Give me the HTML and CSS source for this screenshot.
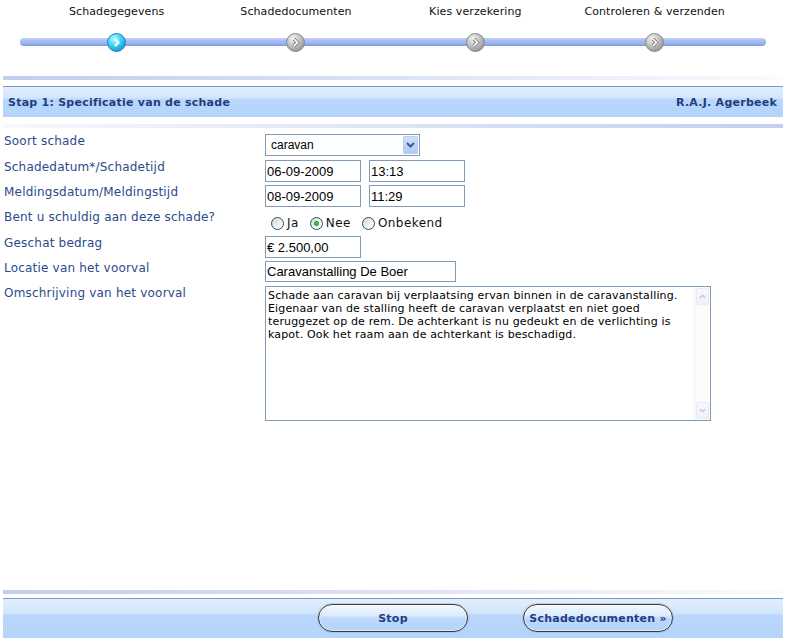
FILE: index.html
```html
<!DOCTYPE html>
<html lang="nl">
<head>
<meta charset="utf-8">
<title>Schade melden - Stap 1</title>
<link rel="stylesheet" href="styles.css">
</head>
<body>
<div class="page">
  <div class="progress">
    <div class="step">
      <span class="step-label">Schadegegevens</span>
      <svg class="dot" width="19" height="19" viewBox="0 0 19 19">
        <defs>
          <radialGradient id="gActive" cx="38%" cy="30%" r="75%">
            <stop offset="0" stop-color="#c4fcff"/>
            <stop offset=".45" stop-color="#3fdcf6"/>
            <stop offset="1" stop-color="#138fd8"/>
          </radialGradient>
        </defs>
        <circle cx="9.5" cy="9.5" r="9" fill="url(#gActive)" stroke="#2a7fd2" stroke-width="1"/>
        <polyline points="8,6 11.3,9.5 8,13" fill="none" stroke="#ffffff" stroke-width="2.2"/>
      </svg>
    </div>
    <div class="step">
      <span class="step-label">Schadedocumenten</span>
      <svg class="dot" width="19" height="19" viewBox="0 0 19 19">
        <defs>
          <radialGradient id="gGrey1" cx="38%" cy="30%" r="75%">
            <stop offset="0" stop-color="#f6f6f6"/>
            <stop offset=".5" stop-color="#c4c4c4"/>
            <stop offset="1" stop-color="#8e8e8e"/>
          </radialGradient>
        </defs>
        <circle cx="9.5" cy="9.5" r="9" fill="url(#gGrey1)" stroke="#8a8a8a" stroke-width="1"/>
        <polyline points="8,6 11.3,9.5 8,13" fill="none" stroke="#7a7a7a" stroke-width="3.4"/>
        <polyline points="8,6 11.3,9.5 8,13" fill="none" stroke="#ffffff" stroke-width="1.8"/>
      </svg>
    </div>
    <div class="step">
      <span class="step-label">Kies verzekering</span>
      <svg class="dot" width="19" height="19" viewBox="0 0 19 19">
        <defs>
          <radialGradient id="gGrey2" cx="38%" cy="30%" r="75%">
            <stop offset="0" stop-color="#f6f6f6"/>
            <stop offset=".5" stop-color="#c4c4c4"/>
            <stop offset="1" stop-color="#8e8e8e"/>
          </radialGradient>
        </defs>
        <circle cx="9.5" cy="9.5" r="9" fill="url(#gGrey2)" stroke="#8a8a8a" stroke-width="1"/>
        <polyline points="8,6 11.3,9.5 8,13" fill="none" stroke="#7a7a7a" stroke-width="3.4"/>
        <polyline points="8,6 11.3,9.5 8,13" fill="none" stroke="#ffffff" stroke-width="1.8"/>
      </svg>
    </div>
    <div class="step">
      <span class="step-label">Controleren &amp; verzenden</span>
      <svg class="dot" width="19" height="19" viewBox="0 0 19 19">
        <defs>
          <radialGradient id="gGrey3" cx="38%" cy="30%" r="75%">
            <stop offset="0" stop-color="#f6f6f6"/>
            <stop offset=".5" stop-color="#c4c4c4"/>
            <stop offset="1" stop-color="#8e8e8e"/>
          </radialGradient>
        </defs>
        <circle cx="9.5" cy="9.5" r="9" fill="url(#gGrey3)" stroke="#8a8a8a" stroke-width="1"/>
        <polyline points="8,6 11.3,9.5 8,13" fill="none" stroke="#7a7a7a" stroke-width="3.4"/>
        <polyline points="8,6 11.3,9.5 8,13" fill="none" stroke="#ffffff" stroke-width="1.8"/>
      </svg>
    </div>
  </div>

  <div class="strip strip-fade-right"></div>
  <div class="band header-band">
    <span class="band-title">Stap 1: Specificatie van de schade</span>
    <span class="band-title">R.A.J. Agerbeek</span>
  </div>
  <div class="strip strip-fade-left"></div>

  <form class="form">
    <label class="lbl">Soort schade</label>
    <div class="ctl">
      <div class="select">
        <select class="select-input">
          <option>caravan</option>
          <option>auto</option>
          <option>woning</option>
        </select>
        <span class="select-btn">
          <svg width="9" height="6" viewBox="0 0 9 6"><polyline points="1,1 4.5,4.5 8,1" fill="none" stroke="#4a5b80" stroke-width="2"/></svg>
        </span>
      </div>
    </div>

    <label class="lbl">Schadedatum*/Schadetijd</label>
    <div class="ctl pair">
      <input class="txt w96" type="text" value="06-09-2009">
      <input class="txt w96" type="text" value="13:13">
    </div>

    <label class="lbl">Meldingsdatum/Meldingstijd</label>
    <div class="ctl pair">
      <input class="txt w96" type="text" value="08-09-2009">
      <input class="txt w96" type="text" value="11:29">
    </div>

    <label class="lbl">Bent u schuldig aan deze schade?</label>
    <div class="ctl radios">
      <label class="opt"><input type="radio" name="schuld" class="radio">Ja</label>
      <label class="opt"><input type="radio" name="schuld" class="radio" checked>Nee</label>
      <label class="opt"><input type="radio" name="schuld" class="radio">Onbekend</label>
    </div>

    <label class="lbl">Geschat bedrag</label>
    <div class="ctl">
      <input class="txt w96" type="text" value="€ 2.500,00">
    </div>

    <label class="lbl">Locatie van het voorval</label>
    <div class="ctl">
      <input class="txt w191 h21" type="text" value="Caravanstalling De Boer">
    </div>

    <label class="lbl">Omschrijving van het voorval</label>
    <div class="ctl">
      <div class="ta-wrap">
        <textarea class="ta">Schade aan caravan bij verplaatsing ervan binnen in de caravanstalling.
Eigenaar van de stalling heeft de caravan verplaatst en niet goed
teruggezet op de rem. De achterkant is nu gedeukt en de verlichting is
kapot. Ook het raam aan de achterkant is beschadigd.</textarea>
        <div class="vscroll">
          <span class="sb-btn"><svg width="7" height="5" viewBox="0 0 7 5"><polyline points="0.8,4 3.5,1.3 6.2,4" fill="none" stroke="#c3cad8" stroke-width="1.6"/></svg></span>
          <span class="sb-track"></span>
          <span class="sb-btn"><svg width="7" height="5" viewBox="0 0 7 5"><polyline points="0.8,1 3.5,3.7 6.2,1" fill="none" stroke="#c3cad8" stroke-width="1.6"/></svg></span>
        </div>
      </div>
    </div>
  </form>

  <div class="footer">
    <div class="strip strip-fade-right"></div>
    <div class="band button-band">
      <button class="pill" type="button">Stop</button>
      <button class="pill" type="button">Schadedocumenten »</button>
    </div>
  </div>
</div>
</body>
</html>
```

FILE: styles.css
```css
html, body {
  margin: 0;
  padding: 0;
  background: #ffffff;
}

.page {
  box-sizing: border-box;
  min-height: 641px;
  padding: 0 3px 3px 3px;
  display: flex;
  flex-direction: column;
  font-family: "DejaVu Sans", Verdana, sans-serif;
}

/* progress steps */
.progress {
  position: relative;
  display: grid;
  grid-template-columns: repeat(4, 179.33px);
  padding: 5px 0 0 24px;
}

.progress::before {
  content: "";
  position: absolute;
  left: 17px;
  right: 17px;
  top: 38px;
  height: 8px;
  border-radius: 4px;
  background: linear-gradient(to bottom, #c2d1f6 0%, #a9bff1 35%, #9cb4ee 65%, #8199e0 100%);
}

.step {
  position: relative;
  z-index: 1;
  display: flex;
  flex-direction: column;
  align-items: center;
}

.step-label {
  font-size: 11px;
  line-height: 13px;
  letter-spacing: 0.1px;
  color: #111111;
  white-space: nowrap;
}

.dot {
  display: block;
  margin-top: 15px;
}

/* strips and bands */
.strip {
  height: 4px;
}

.strip-fade-right {
  margin-top: 24px;
  background: linear-gradient(to right, #c2cdef 0%, #dbe2f6 50%, #fafbfe 100%);
}

.strip-fade-left {
  margin-top: 7px;
  background: linear-gradient(to right, #f6f8fd 0%, #dde4f6 50%, #c4cff0 100%);
}

.band {
  border-top: 1px solid #7898c8;
  background: linear-gradient(to bottom, #e3eefd 0%, #d2e5fc 36%, #b9d7fc 42%, #b5d4fb 100%);
}

.header-band {
  margin-top: 6px;
  height: 30px;
  display: flex;
  align-items: center;
  justify-content: space-between;
  padding: 0 6px 0 5px;
}

.band-title {
  font-size: 11px;
  font-weight: bold;
  letter-spacing: 0.25px;
  color: #1e3e7e;
}

/* form */
.form {
  margin: 6px 0 0 0;
  display: grid;
  grid-template-columns: 262px 1fr;
  grid-template-rows: 26px 25px 25px 26px 25px 25px auto;
}

.lbl {
  padding-left: 1px;
  font-size: 12px;
  line-height: 14px;
  letter-spacing: 0.2px;
  color: #2b4a8a;
}

.ctl {
  display: flex;
  align-items: flex-start;
}

.pair {
  gap: 8px;
}

.txt {
  box-sizing: border-box;
  height: 22px;
  margin: 0;
  padding: 0 1px;
  border: 1px solid #7f9db9;
  background: #ffffff;
  font-family: "Liberation Sans", Arial, sans-serif;
  font-size: 13px;
  color: #000000;
  outline: none;
}

.w96 { width: 96px; }
.w191 { width: 191px; }
.h21 { height: 21px; }

/* select */
.select {
  box-sizing: border-box;
  width: 155px;
  height: 22px;
  border: 1px solid #7f9db9;
  background: #ffffff;
  display: flex;
  align-items: stretch;
  padding: 1px;
}

.select-input {
  flex: 1;
  min-width: 0;
  appearance: none;
  -webkit-appearance: none;
  border: none;
  background: transparent;
  margin: 0;
  padding: 0 0 0 4px;
  font-family: "Liberation Sans", Arial, sans-serif;
  font-size: 12px;
  color: #000000;
  outline: none;
}

.select-btn {
  width: 15px;
  display: flex;
  align-items: center;
  justify-content: center;
  border-radius: 2px;
  background: linear-gradient(to bottom, #d3e0fd 0%, #c0d2fa 50%, #b2c6f4 100%);
  box-shadow: inset 0 0 0 1px #bccdf5;
}

/* radios */
.radios {
  align-items: center;
  height: 22px;
  margin-top: 2px;
}

.opt {
  display: flex;
  align-items: center;
  margin-right: 5px;
  font-size: 12px;
  letter-spacing: 0.45px;
  color: #111111;
}

.radio {
  appearance: none;
  -webkit-appearance: none;
  box-sizing: border-box;
  width: 13px;
  height: 13px;
  margin: 0 3px 0 6px;
  border: 1px solid #1d5281;
  border-radius: 50%;
  background: linear-gradient(135deg, #d6d6cf 0%, #f2f2ef 60%, #ffffff 100%);
}

.radio:checked {
  background:
    radial-gradient(circle at 50% 50%, #5cd65c 0, #21a121 2px, rgba(33,161,33,0) 3px),
    linear-gradient(135deg, #d6d6cf 0%, #f2f2ef 60%, #ffffff 100%);
}

/* textarea */
.ta-wrap {
  box-sizing: border-box;
  width: 446px;
  height: 135px;
  border: 1px solid #7f9db9;
  background: #ffffff;
  display: flex;
}

.ta {
  flex: 1;
  min-width: 0;
  margin: 0;
  border: none;
  padding: 2px 2px;
  resize: none;
  overflow: hidden;
  white-space: pre;
  font-family: "DejaVu Sans", Verdana, sans-serif;
  font-size: 11px;
  line-height: 13px;
  letter-spacing: 0.15px;
  color: #000000;
  outline: none;
}

.vscroll {
  width: 15px;
  display: flex;
  flex-direction: column;
  background: #fbfbf9;
  border-left: 1px solid #f0f0ee;
}

.sb-btn {
  height: 15px;
  margin: 1px;
  display: flex;
  align-items: center;
  justify-content: center;
  border: 1px solid #e6ebf4;
  border-radius: 2px;
  background: linear-gradient(to bottom, #f8f9fc, #eef1f7);
}

.sb-track {
  flex: 1;
}

/* footer */
.footer {
  margin-top: auto;
}

.footer .strip-fade-right {
  margin-top: 0;
}

.button-band {
  margin-top: 4px;
  height: 40px;
  box-sizing: border-box;
  display: flex;
  justify-content: flex-end;
  align-items: flex-start;
  gap: 55px;
  padding: 5px 110px 0 0;
}

.pill {
  box-sizing: border-box;
  width: 150px;
  height: 28px;
  margin: 0;
  padding: 0;
  border: 1px solid #3a3a3a;
  border-radius: 14px;
  background: linear-gradient(to bottom, #f2f8fe 0%, #dcebfc 40%, #bcd9fc 52%, #b5d4fb 100%);
  box-shadow: 0 0 0 1px rgba(150,160,180,0.35), inset 0 0 0 1px rgba(255,255,255,0.55);
  font-family: "DejaVu Sans", Verdana, sans-serif;
  font-size: 11px;
  font-weight: bold;
  letter-spacing: 0.25px;
  color: #1e3e7e;
  cursor: pointer;
}
```
